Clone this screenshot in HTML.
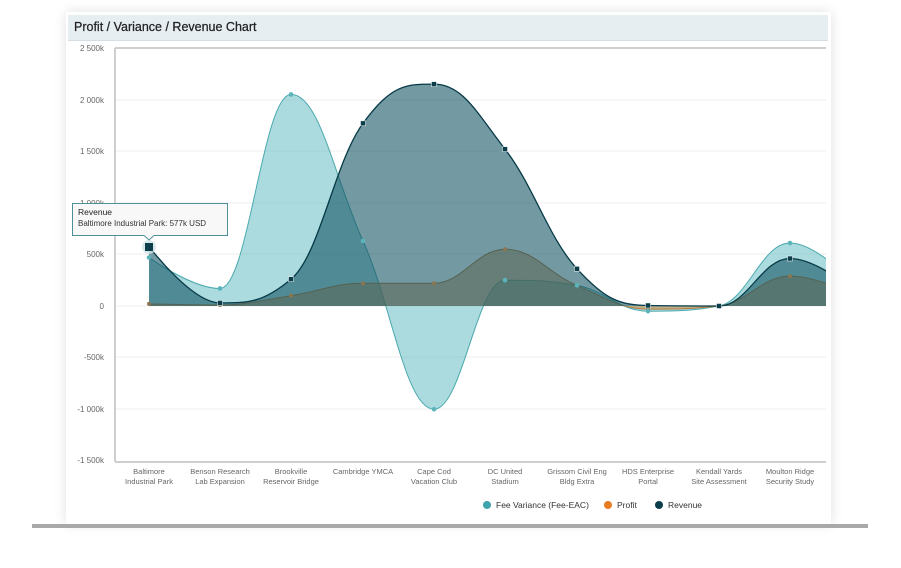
<!DOCTYPE html>
<html><head><meta charset="utf-8"><style>
html,body{margin:0;padding:0;background:#fff;width:901px;height:568px;overflow:hidden;font-family:"Liberation Sans",sans-serif}
#card{position:absolute;left:66px;top:12px;width:765px;height:512px;background:#fff;box-shadow:0 0 12px rgba(0,0,0,0.12)}
#bar{position:absolute;left:32px;top:524px;width:836px;height:4px;background:#a9a9a9}
#hdr{position:absolute;left:68px;top:15px;width:760px;height:25px;background:#e6eef2;border-bottom:1px solid #d5dde2;font-size:12.5px;color:#222;line-height:24px;text-indent:6px;-webkit-text-stroke:0.25px #222}
svg{position:absolute;left:0;top:0}
</style></head><body>
<div id="card"></div><div id="bar"></div>
<div id="hdr">Profit / Variance / Revenue Chart</div>
<svg id="s" width="901" height="568" font-family="Liberation Sans, sans-serif">
<g stroke="#ececec" stroke-width="1">
<line x1="115" x2="826" y1="100" y2="100"/><line x1="115" x2="826" y1="151" y2="151"/><line x1="115" x2="826" y1="203" y2="203"/><line x1="115" x2="826" y1="254" y2="254"/><line x1="115" x2="826" y1="306" y2="306"/><line x1="115" x2="826" y1="357" y2="357"/><line x1="115" x2="826" y1="409" y2="409"/>
</g>
<line x1="115" x2="826" y1="48" y2="48" stroke="#cfcfcf" stroke-width="2"/>
<line x1="115" x2="826" y1="462" y2="462" stroke="#cfcfcf" stroke-width="2"/>
<line x1="115" x2="115" y1="48" y2="462" stroke="#cfcfcf" stroke-width="2"/>
<g font-size="8" fill="#666" text-anchor="end">
<text x="104" y="51">2 500k</text><text x="104" y="103">2 000k</text><text x="104" y="154">1 500k</text><text x="104" y="206">1 000k</text><text x="104" y="257">500k</text><text x="104" y="309">0</text><text x="104" y="360">-500k</text><text x="104" y="412">-1 000k</text><text x="104" y="463">-1 500k</text>
</g>
<defs><clipPath id="c"><rect x="115" y="48" width="711" height="414"/></clipPath></defs>
<g id="plot" clip-path="url(#c)"></g>
<g font-size="7.5" fill="#666" text-anchor="middle">
<text x="149" y="474">Baltimore</text><text x="149" y="484">Industrial Park</text>
<text x="220" y="474">Benson Research</text><text x="220" y="484">Lab Expansion</text>
<text x="291" y="474">Brookville</text><text x="291" y="484">Reservoir Bridge</text>
<text x="363" y="474">Cambridge YMCA</text>
<text x="434" y="474">Cape Cod</text><text x="434" y="484">Vacation Club</text>
<text x="505" y="474">DC United</text><text x="505" y="484">Stadium</text>
<text x="577" y="474">Grissom Civil Eng</text><text x="577" y="484">Bldg Extra</text>
<text x="648" y="474">HDS Enterprise</text><text x="648" y="484">Portal</text>
<text x="719" y="474">Kendall Yards</text><text x="719" y="484">Site Assessment</text>
<text x="790" y="474">Moulton Ridge</text><text x="790" y="484">Security Study</text>
</g>
<g font-size="8.5" fill="#333">
<circle cx="487" cy="505" r="4" fill="#3fa3ab"/><text x="496" y="508">Fee Variance (Fee-EAC)</text>
<circle cx="608" cy="505" r="4" fill="#e87d22"/><text x="617" y="508">Profit</text>
<circle cx="659" cy="505" r="4" fill="#0b3d4a"/><text x="668" y="508">Revenue</text>
</g>
<g id="tt">
<circle cx="149" cy="247" r="7" fill="#cfe3e6" opacity="0.8"/>
<rect x="145" y="243" width="8" height="8" fill="#0b3d4a"/>
<path d="M72.5 203.5 H227.5 V235.5 H154 L149 240 L144 235.5 H72.5 Z" fill="#f8f8f8" stroke="#4f8f96" stroke-width="1"/>
<text x="78" y="215" font-size="8.5" fill="#222">Revenue</text>
<text x="78" y="226" font-size="8" fill="#333">Baltimore Industrial Park: 577k USD</text>
</g>
</svg>
<script>
var X=[149,220,291,363,434,505,577,648,719,790,861];
function Y(v){return 306-v*0.1032;}
function path(vals){
 var p=vals.map(function(v,i){return [X[i],Y(v)];});
 var d="M"+p[0][0]+" "+p[0][1];
 var cps=[];
 for(var i=0;i<p.length;i++){
  if(i==0||i==p.length-1){cps.push(null);continue;}
  var s=1.5,dn=2.5,x=p[i][0],y=p[i][1],px=p[i-1][0],py=p[i-1][1],nx=p[i+1][0],ny=p[i+1][1];
  var lx=(s*x+px)/dn,ly=(s*y+py)/dn,rx=(s*x+nx)/dn,ry=(s*y+ny)/dn;
  var c=((ry-ly)*(rx-x))/(rx-lx)+y-ry;ly+=c;ry+=c;
  if(ly>Math.max(py,y)){ly=Math.max(py,y);ry=2*y-ly;}else if(ly<Math.min(py,y)){ly=Math.min(py,y);ry=2*y-ly;}
  if(ry>Math.max(ny,y)){ry=Math.max(ny,y);ly=2*y-ry;}else if(ry<Math.min(ny,y)){ry=Math.min(ny,y);ly=2*y-ry;}
  cps.push([lx,ly,rx,ry]);
 }
 for(var i=1;i<p.length;i++){
  var a=cps[i-1]?[cps[i-1][2],cps[i-1][3]]:p[i-1];
  var b=cps[i]?[cps[i][0],cps[i][1]]:p[i];
  d+=" C"+a[0].toFixed(1)+" "+a[1].toFixed(1)+" "+b[0].toFixed(1)+" "+b[1].toFixed(1)+" "+p[i][0]+" "+p[i][1].toFixed(1);
 }
 return d;
}
var fee=[470,170,2050,630,-1000,250,200,-50,0,610,150];
var rev=[577,30,260,1770,2150,1520,360,5,0,460,100];
var pro=[20,10,100,220,220,550,200,-30,0,290,80];
var g=document.getElementById("plot"),h="";
function area(v,fill,op,stroke,sw){
 var d=path(v);
 h+='<path d="'+d+' L861 306 L149 306 Z" fill="'+fill+'" fill-opacity="'+op+'"/>';
 h+='<path d="'+d+'" fill="none" stroke="'+stroke+'" stroke-width="'+sw+'"/>';
}
area(fee,"#73c3c8",0.6,"#4aa9af",1);
area(pro,"#c98a45",0.55,"#b77a40",1);
area(rev,"#0e4f5e",0.58,"#063a47",1.3);
for(var i=0;i<10;i++){
 h+='<circle cx="'+X[i]+'" cy="'+Y(pro[i])+'" r="2" fill="#8a7550"/>';
 h+='<circle cx="'+X[i]+'" cy="'+Y(fee[i])+'" r="2.3" fill="#5ab4ba"/>';
 h+='<rect x="'+(X[i]-2.5)+'" y="'+(Y(rev[i])-2.5)+'" width="5" height="5" fill="#0b3d4a" stroke="#fff" stroke-width="0.5"/>';
}
g.innerHTML=h;
</script>
</body></html>
